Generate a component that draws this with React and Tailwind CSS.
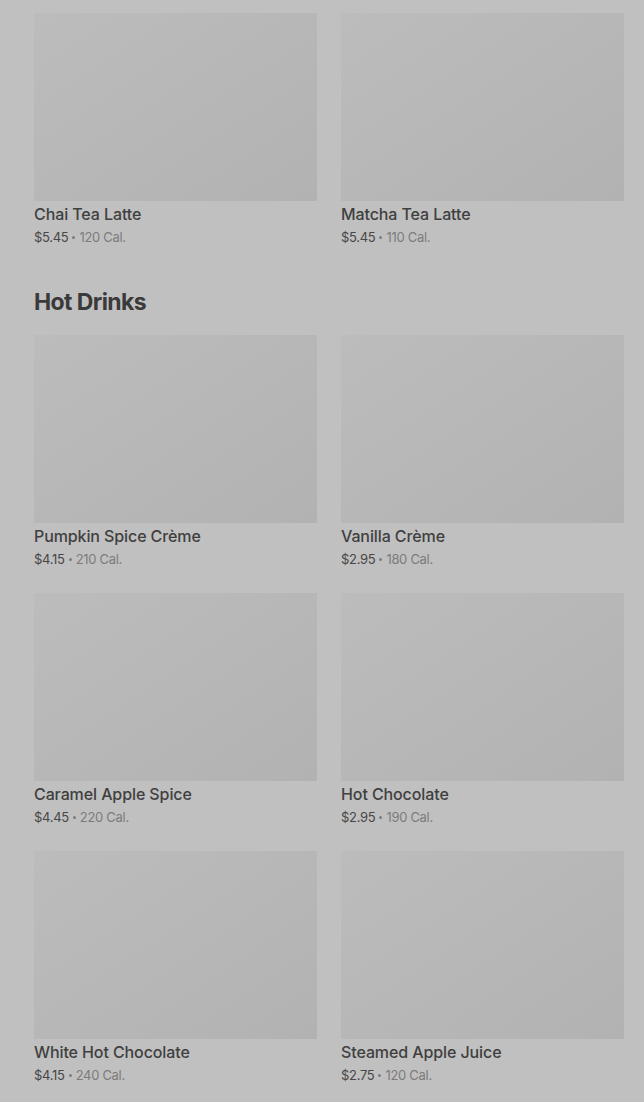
import React from 'react';

const teas = [
  { name: 'Chai Tea Latte', price: '$5.45', cal: '120 Cal.' },
  { name: 'Matcha Tea Latte', price: '$5.45', cal: '110 Cal.' },
];

const hotDrinks = [
  { name: 'Pumpkin Spice Crème', price: '$4.15', cal: '210 Cal.' },
  { name: 'Vanilla Crème', price: '$2.95', cal: '180 Cal.' },
  { name: 'Caramel Apple Spice', price: '$4.45', cal: '220 Cal.' },
  { name: 'Hot Chocolate', price: '$2.95', cal: '190 Cal.' },
  { name: 'White Hot Chocolate', price: '$4.15', cal: '240 Cal.' },
  { name: 'Steamed Apple Juice', price: '$2.75', cal: '120 Cal.' },
];

const Item = ({ item }) => (
  <div className="flex flex-col">
    <div className="h-[188px] w-full bg-gradient-to-br from-[#bcbcbc] via-[#b7b7b7] to-[#b2b2b2]" />
    <div className="mt-[1px] text-[16px] leading-6 font-medium tracking-[-0.1px] text-[#3f3f3f]">{item.name}</div>
    <div className="mt-[1px] flex items-center text-[13px] leading-5 tracking-[-0.3px] text-[#474747]">
      <span>{item.price}</span>
      <span className="mx-[4px] inline-block h-[3px] w-[3px] rounded-full bg-[#7c7c7c]" />
      <span className="text-[#7c7c7c]">{item.cal}</span>
    </div>
  </div>
);

const App = () => {
  return (
    <div
      className="min-h-[1102px] bg-[#c0c0c0] pl-[34px] pr-[20px] pt-[13px]"
      style={{ fontFamily: 'Inter, "Noto Sans", sans-serif' }}
    >
      <div className="grid grid-cols-2 gap-x-6 gap-y-6">
        {teas.map((item) => (
          <Item key={item.name} item={item} />
        ))}
      </div>

      <h2 className="mt-[39px] mb-[17px] text-[23px] leading-8 font-bold tracking-[-0.6px] text-[#3a3a3a]">Hot Drinks</h2>

      <div className="grid grid-cols-2 gap-x-6 gap-y-6">
        {hotDrinks.map((item) => (
          <Item key={item.name} item={item} />
        ))}
      </div>
    </div>
  );
};

export default App;
